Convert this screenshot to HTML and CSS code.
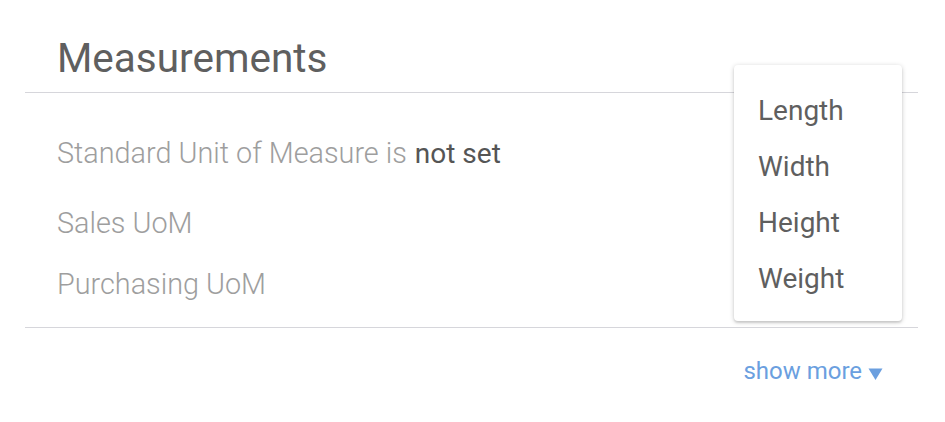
FILE: index.html
```html
<!DOCTYPE html>
<html lang="en">
<head>
    <meta charset="UTF-8">
    <meta name="viewport" content="width=device-width, initial-scale=1.0">
    <title>Measurements</title>
    <link rel="stylesheet" href="styles.css">
</head>
<body>
    <div class="panel">
        <h2 class="panel-title">Measurements</h2>
        <div class="panel-body">
            <div class="row row-standard">Standard Unit of Measure is <span class="value">not set</span></div>
            <div class="row row-sales">Sales UoM</div>
            <div class="row">Purchasing UoM</div>
        </div>
        <div class="panel-footer">
            <a class="show-more" href="#">show more <svg class="caret" width="15" height="12" viewBox="0 0 15 12"><path d="M0.5 0.5 H14.5 L7.5 12 Z" fill="currentColor"/></svg></a>
        </div>

        <ul class="menu">
            <li>Length</li>
            <li>Width</li>
            <li>Height</li>
            <li>Weight</li>
        </ul>
    </div>
</body>
</html>
```

FILE: styles.css
```css
body {
    font-family: 'Roboto', 'Liberation Sans', sans-serif;
    background-color: #ffffff;
    color: #616161;
    margin: 0;
}

.panel {
    position: relative;
    margin: 0 27px 0 25px;
}

.panel-title {
    font-size: 40.5px;
    font-weight: 400;
    color: #5f5f5f;
    margin: 0;
    padding: 36px 32px 12px;
    line-height: 44px;
}

.panel-body {
    border-top: 1px solid #d6d6db;
    border-bottom: 1px solid #d6d6db;
    padding: 45px 32px 28px;
}

.row {
    font-size: 28.8px;
    font-weight: 300;
    color: #9e9e9e;
    line-height: 30px;
}

.row-standard {
    margin-bottom: 39px;
}

.row-sales {
    margin-bottom: 31px;
}

.row .value {
    font-size: 28px;
    font-weight: 400;
    color: #555555;
    margin-left: 1px;
}

.panel-footer {
    display: flex;
    justify-content: flex-end;
    padding: 28px 35px 0 0;
}

.show-more {
    font-size: 24px;
    color: #6b9fdf;
    text-decoration: none;
    line-height: 30px;
}

.show-more .caret {
    vertical-align: -1px;
}

.menu {
    position: absolute;
    top: 65px;
    right: 16px;
    width: 168px;
    margin: 0;
    padding: 18px 0 14px;
    list-style: none;
    background-color: #ffffff;
    border-radius: 4px;
    box-shadow: 0 1px 5px rgba(0, 0, 0, 0.2), 0 2px 2px rgba(0, 0, 0, 0.1);
}

.menu li {
    font-size: 28px;
    color: #5f5f5f;
    line-height: 56px;
    padding: 0 24px;
}
```
